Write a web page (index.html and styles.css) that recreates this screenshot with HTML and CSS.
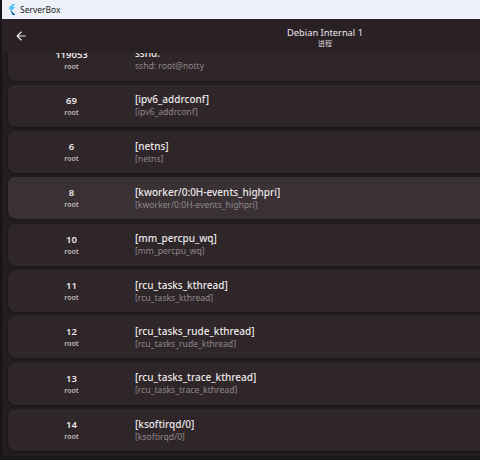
FILE: index.html
```html
<!DOCTYPE html>
<html lang="zh">
<head>
  <meta charset="UTF-8">
  <meta name="viewport" content="width=device-width, initial-scale=1.0">
  <title>ServerBox</title>
  <link rel="stylesheet" href="styles.css">
</head>
<body>
  <div class="window">
    <div class="titlebar">
      <svg class="logo" width="9" height="11" viewBox="0 0 9 11">
        <polygon points="5.5,0 8.5,0 3,5.5 1.5,4" fill="#4fc3f7"/>
        <polygon points="3,5.5 5.5,3 8.5,3 4.5,7" fill="#4fc3f7"/>
        <polygon points="3,5.5 4.5,7 8.5,11 5.5,11" fill="#0d5ea8"/>
      </svg>
      <span>ServerBox</span>
    </div>

    <div class="app">
      <header class="appbar">
        <button class="back" aria-label="Back">
          <svg width="14" height="14" viewBox="0 0 24 24">
            <path d="M20 11H7.83l5.59-5.59L12 4l-8 8 8 8 1.41-1.41L7.83 13H20v-2z" fill="#ece8ea"/>
          </svg>
        </button>
        <div class="heading">
          <div class="heading-title">Debian Internal 1</div>
          <div class="heading-sub">进程</div>
        </div>
      </header>

      <main class="list">
        <div class="proc first">
          <div class="pid"><b>119053</b><small>root</small></div>
          <div class="cmd"><b>sshd:</b><small>sshd: root@notty</small></div>
        </div>
        <div class="proc">
          <div class="pid"><b>69</b><small>root</small></div>
          <div class="cmd"><b>[ipv6_addrconf]</b><small>[ipv6_addrconf]</small></div>
        </div>
        <div class="proc">
          <div class="pid"><b>6</b><small>root</small></div>
          <div class="cmd"><b>[netns]</b><small>[netns]</small></div>
        </div>
        <div class="proc hover">
          <div class="pid"><b>8</b><small>root</small></div>
          <div class="cmd"><b>[kworker/0:0H-events_highpri]</b><small>[kworker/0:0H-events_highpri]</small></div>
        </div>
        <div class="proc">
          <div class="pid"><b>10</b><small>root</small></div>
          <div class="cmd"><b>[mm_percpu_wq]</b><small>[mm_percpu_wq]</small></div>
        </div>
        <div class="proc">
          <div class="pid"><b>11</b><small>root</small></div>
          <div class="cmd"><b>[rcu_tasks_kthread]</b><small>[rcu_tasks_kthread]</small></div>
        </div>
        <div class="proc">
          <div class="pid"><b>12</b><small>root</small></div>
          <div class="cmd"><b>[rcu_tasks_rude_kthread]</b><small>[rcu_tasks_rude_kthread]</small></div>
        </div>
        <div class="proc">
          <div class="pid"><b>13</b><small>root</small></div>
          <div class="cmd"><b>[rcu_tasks_trace_kthread]</b><small>[rcu_tasks_trace_kthread]</small></div>
        </div>
        <div class="proc">
          <div class="pid"><b>14</b><small>root</small></div>
          <div class="cmd"><b>[ksoftirqd/0]</b><small>[ksoftirqd/0]</small></div>
        </div>
      </main>
    </div>
  </div>
</body>
</html>
```

FILE: styles.css
```css
html, body { margin: 0; height: 100%; background: #1b1719; }
body { font-family: "Noto Sans", "Noto Sans CJK SC", sans-serif; overflow: hidden; }

.window { display: flex; flex-direction: column; width: 480px; height: 456px; border-left: 2px solid #161416; box-sizing: border-box; background: #241d20; }

.titlebar { height: 19px; flex: none; display: flex; align-items: center; gap: 4px; padding-left: 5px; background: #eef2f8; color: #1c1c1c; font-size: 8.5px; }
.logo { display: block; }

.app { flex: 1; display: flex; flex-direction: column; min-height: 0; }

.appbar { height: 34px; flex: none; display: flex; align-items: center; background: #2a2125; position: relative; z-index: 1; }
.back { width: 34px; height: 34px; padding: 0 0 0 4px; border: none; background: none; display: flex; align-items: center; justify-content: center; }
.back svg { display: block; }
.heading { flex: 1; text-align: center; padding-left: 134px; padding-top: 2px; }
.heading-title { font-size: 9.3px; color: #ece8ea; line-height: 12px; }
.heading-sub { font-size: 7px; color: #d8d2d5; line-height: 9px; }

.list { flex: 1; overflow: hidden; display: flex; flex-direction: column; gap: 4.33px; padding-left: 6px; }

.proc { flex: none; height: 42px; display: flex; align-items: center; background: #2f2629; border-radius: 8px 0 0 8px; box-shadow: 0 1px 2px rgba(0, 0, 0, 0.35); }
.proc.first { margin-top: -14.5px; }
.proc.hover { background: #3a3134; }

.pid { width: 127px; display: flex; flex-direction: column; align-items: center; line-height: 13px; }
.pid b { font-size: 9.5px; font-weight: 600; color: #ece8ea; }
.pid small { font-size: 7px; font-weight: 600; color: #c0b8bb; line-height: 11px; }

.cmd { display: flex; flex-direction: column; line-height: 14px; }
.cmd b { font-size: 10px; font-weight: 500; color: #ece8ea; }
.cmd small { font-size: 8.6px; color: #8f888b; line-height: 13px; }
```
